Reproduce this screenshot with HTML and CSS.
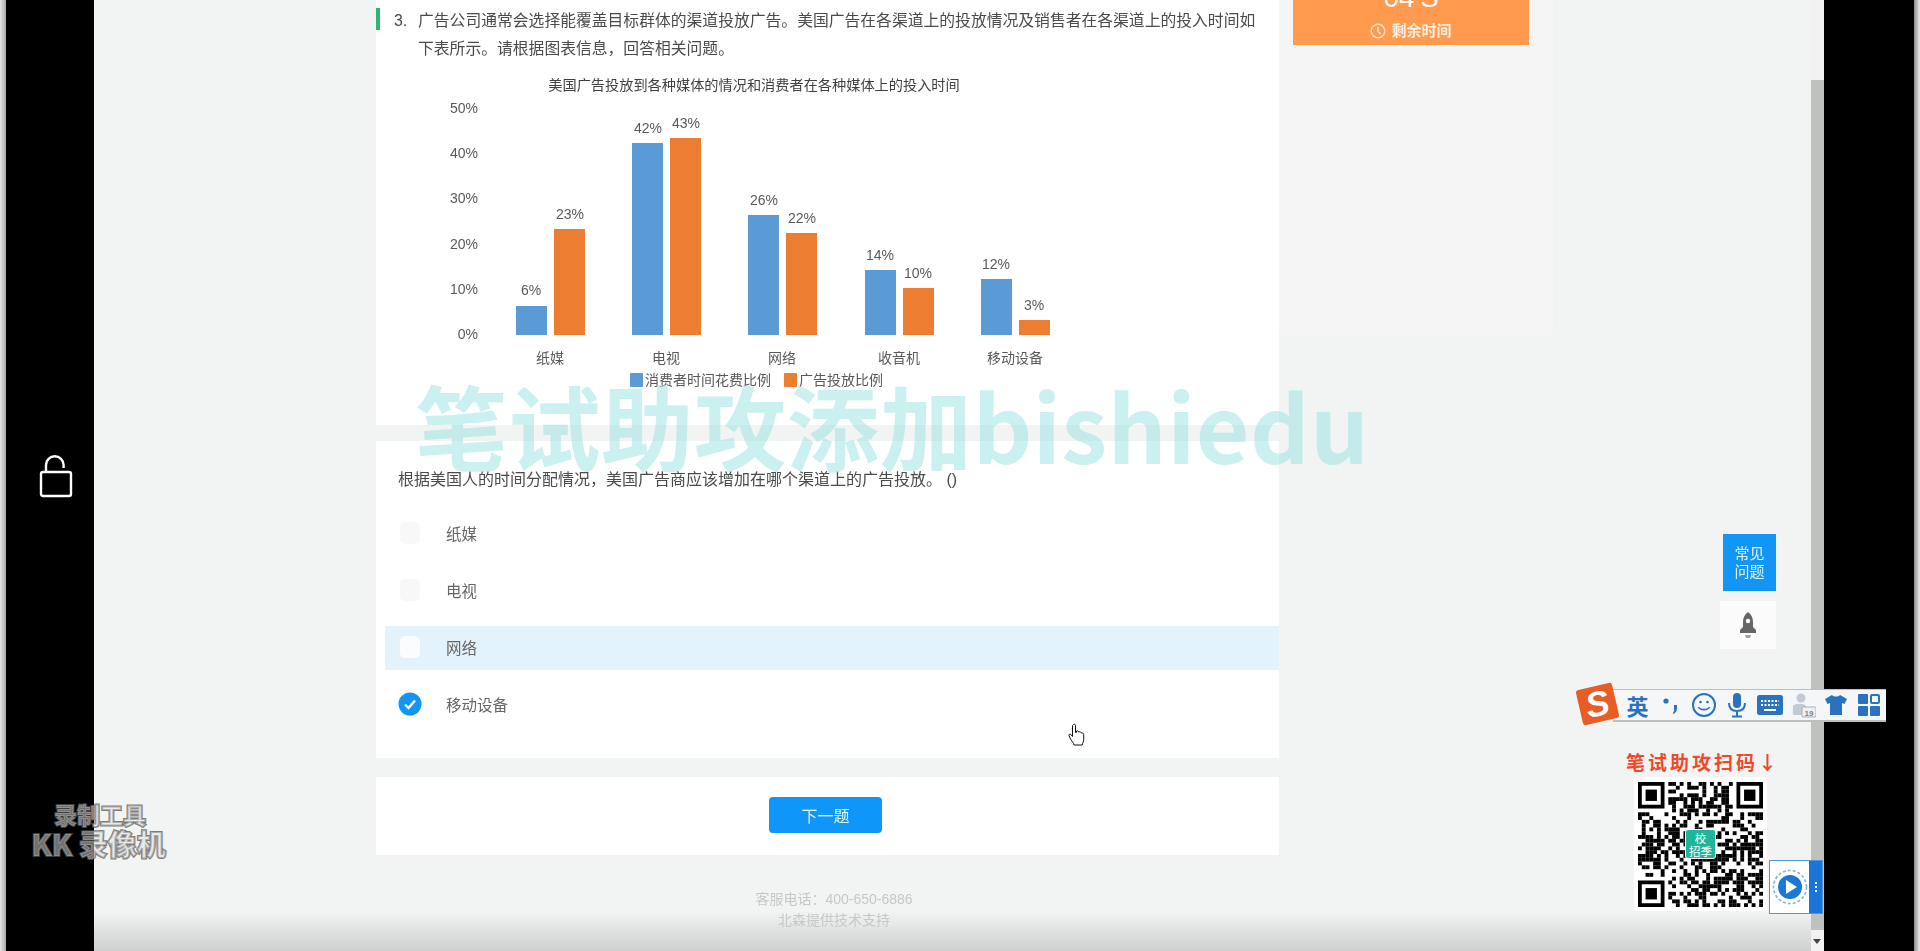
FILE: index.html
```html
<!DOCTYPE html>
<html lang="zh-CN">
<head>
    <meta charset="UTF-8">
    <meta name="viewport" content="width=device-width, initial-scale=1.0">
    <title>笔试</title>
    <link rel="stylesheet" href="styles.css">
</head>
<body>
    <div class="edge-left"></div>
    <aside class="black-left">
        <svg class="lock" width="36" height="44" viewBox="0 0 36 44" fill="none" stroke="#fff" stroke-width="2.4">
            <rect x="3" y="17" width="30" height="24" rx="2"/>
            <path d="M8 17V10a8.800 8.800 0 0 1 17.600 0v3"/>
        </svg>
    </aside>

    <main class="page">
        <div class="exam">
            <div class="exam-main">
                <section class="card card-chart">
                    <div class="stem">
                        <span class="stem-mark"></span>
                        <span class="stem-no">3.</span>
                        <p class="stem-text">广告公司通常会选择能覆盖目标群体的渠道投放广告。美国广告在各渠道上的投放情况及销售者在各渠道上的投入时间如下表所示。请根据图表信息，回答相关问题。</p>
                    </div>
                    <svg class="chart" width="903" height="360" viewBox="376 63 903 360">
                        <text class="chart-title" x="754" y="90" text-anchor="middle">美国广告投放到各种媒体的情况和消费者在各种媒体上的投入时间</text>
                        <g class="axis" text-anchor="end">
                            <text x="478" y="113">50%</text>
                            <text x="478" y="158">40%</text>
                            <text x="478" y="203">30%</text>
                            <text x="478" y="249">20%</text>
                            <text x="478" y="294">10%</text>
                            <text x="478" y="339">0%</text>
                        </g>
                        <g fill="#5b9bd5">
                            <rect x="516" y="306" width="31" height="29"/>
                            <rect x="632" y="143" width="31" height="192"/>
                            <rect x="748" y="215" width="31" height="120"/>
                            <rect x="865" y="270" width="31" height="65"/>
                            <rect x="981" y="279" width="31" height="56"/>
                        </g>
                        <g fill="#ed7d31">
                            <rect x="554" y="229" width="31" height="106"/>
                            <rect x="670" y="138" width="31" height="197"/>
                            <rect x="786" y="233" width="31" height="102"/>
                            <rect x="903" y="288" width="31" height="47"/>
                            <rect x="1019" y="320" width="31" height="15"/>
                        </g>
                        <g class="axis" text-anchor="middle">
                            <text x="531" y="295">6%</text>
                            <text x="570" y="219">23%</text>
                            <text x="648" y="133">42%</text>
                            <text x="686" y="128">43%</text>
                            <text x="764" y="205">26%</text>
                            <text x="802" y="223">22%</text>
                            <text x="880" y="260">14%</text>
                            <text x="918" y="278">10%</text>
                            <text x="996" y="269">12%</text>
                            <text x="1034" y="310">3%</text>
                            <text x="550" y="363">纸媒</text>
                            <text x="666" y="363">电视</text>
                            <text x="782" y="363">网络</text>
                            <text x="899" y="363">收音机</text>
                            <text x="1015" y="363">移动设备</text>
                        </g>
                        <rect x="630" y="373" width="13" height="14" rx="1" fill="#5b9bd5"/>
                        <text class="axis" x="645" y="385">消费者时间花费比例</text>
                        <rect x="784" y="373" width="13" height="14" rx="1" fill="#ed7d31"/>
                        <text class="axis" x="799" y="385">广告投放比例</text>
                    </svg>
                </section>

                <section class="card card-options">
                    <p class="question">根据美国人的时间分配情况，美国广告商应该增加在哪个渠道上的广告投放。 ()</p>
                    <div class="option"><span class="ghost"></span>纸媒</div>
                    <div class="option"><span class="ghost"></span>电视</div>
                    <div class="option option-hover"><span class="ghost"></span>网络</div>
                    <div class="option">
                        <svg class="check" width="24" height="24" viewBox="0 0 24 24">
                            <circle cx="12" cy="12" r="11.500" fill="#1296f6"/>
                            <path d="M7 12.500l3.500 3.500 6.500-7.500" fill="none" stroke="#fff" stroke-width="2.400"/>
                        </svg>
                        移动设备
                    </div>
                </section>

                <section class="card card-next">
                    <button class="next-btn">下一题</button>
                </section>

                <footer class="foot">
                    <p>客服电话：400-650-6886</p>
                    <p>北森提供技术支持</p>
                </footer>
            </div>

            <div class="exam-side">
                <div class="timer">
                    <div class="timer-num">04'S</div>
                    <div class="timer-label">
                        <svg width="16" height="16" viewBox="0 0 14 14" fill="none" stroke="#fde3c6" stroke-width="1.300">
                            <circle cx="7" cy="7" r="6"/>
                            <path d="M7 3.500V7.500L9.500 9.500"/>
                        </svg>
                        剩余时间
                    </div>
                </div>
            </div>
        </div>

        <a class="help-btn">常见<br>问题</a>
        <a class="top-btn">
            <svg width="22" height="28" viewBox="0 0 22 28" fill="#666">
                <path d="M11 1c3.500 2.500 5 6 5 10v5l3 3v3H3v-3l3-3v-5c0-4 1.500-7.500 5-10z"/>
                <circle cx="11" cy="10" r="2.200" fill="#fff"/>
                <path d="M8 24h6l-1 3H9z" opacity=".6"/>
            </svg>
        </a>
        <div class="video-fade"></div>
    </main>

    <div class="scrollbar">
        <div class="scroll-thumb"></div>
        <span class="scroll-down"></span>
    </div>
    <aside class="black-right"></aside>
    <div class="edge-right"></div>

    <div class="big-mark">笔试助攻添加bishiedu</div>

    <div class="kk-mark">
        <div class="kk-line1">录制工具</div>
        <div class="kk-line2">KK 录像机</div>
    </div>

    <svg class="hand" width="18" height="24" viewBox="0 0 18 24" fill="#fff" stroke="#111" stroke-width="1">
        <path d="M5.500 1.500c1-.8 2 0 2 1v7l1-.2V8c1-.6 2 0 2 1l1-.1c.9-.3 1.700.2 1.700 1l1 .1c.9 0 1.500.6 1.500 1.500v5c0 2-1 3-1.500 5.500H6c-.5-2-2-3.500-3.500-6L1 12.500c-.5-1 .8-2 1.800-1l1.700 2V2.500z"/>
    </svg>

    <div class="ime">
        <div class="ime-logo"><span>S</span></div>
        <span class="ime-item ime-lang">英</span>
        <span class="ime-item">
            <svg width="24" height="24" viewBox="0 0 24 24" fill="#2a72c0">
                <circle cx="7" cy="8" r="2.600"/>
                <path d="M15 12h3v3c0 3-1.500 5-3.500 6l-.8-1c1-.8 1.500-2 1.500-3.500H15z"/>
            </svg>
        </span>
        <span class="ime-item">
            <svg width="26" height="26" viewBox="0 0 26 26" fill="none" stroke="#2a72c0" stroke-width="2">
                <circle cx="13" cy="13" r="11"/>
                <circle cx="9.500" cy="10" r="1.300" fill="#2a72c0" stroke="none"/>
                <circle cx="16.500" cy="10" r="1.300" fill="#2a72c0" stroke="none"/>
                <path d="M7.500 15c1.500 3.500 9.500 3.500 11 0" stroke-width="1.600"/>
            </svg>
        </span>
        <span class="ime-item">
            <svg width="22" height="26" viewBox="0 0 22 26" fill="none" stroke="#2a72c0" stroke-width="2">
                <rect x="7" y="1" width="8" height="15" rx="4" fill="#2a72c0" stroke="none"/>
                <path d="M3 11c0 5.500 3.500 8 8 8s8-2.500 8-8M11 19v5M6 24.500h10"/>
            </svg>
        </span>
        <span class="ime-item">
            <svg width="26" height="20" viewBox="0 0 26 20">
                <rect width="26" height="20" rx="2.500" fill="#2a72c0"/>
                <path d="M4 6h18M4 10h18" stroke="#fff" stroke-width="2" stroke-dasharray="2 1.500"/>
                <path d="M7 15h12" stroke="#fff" stroke-width="2"/>
            </svg>
        </span>
        <span class="ime-item">
            <svg width="26" height="26" viewBox="0 0 26 26">
                <circle cx="11" cy="6" r="4.500" fill="#c3cad2"/>
                <path d="M3 14c2-3 11-3 13 0v9H6c-3 0-4-1-3-4z" fill="#c3cad2"/>
                <rect x="12" y="15" width="14" height="10" rx="1" fill="#eef0f1" stroke="#aab1b8"/>
                <text class="ime-count" x="19" y="23.500" text-anchor="middle">19</text>
            </svg>
        </span>
        <span class="ime-item">
            <svg width="24" height="24" viewBox="0 0 24 24" fill="#2a72c0">
                <path d="M8 2c1.500 2 6.500 2 8 0l7 4-2.500 5-2.500-1v12H6V10l-2.500 1L1 6z"/>
            </svg>
        </span>
        <span class="ime-item">
            <svg width="22" height="22" viewBox="0 0 22 22" fill="#2a72c0">
                <rect width="10" height="10" rx="1"/>
                <rect x="13" y="1" width="8" height="8" rx="1" fill="none" stroke="#2a72c0" stroke-width="2"/>
                <rect y="12" width="10" height="10" rx="1"/>
                <rect x="12" y="12" width="10" height="10" rx="1"/>
            </svg>
        </span>
    </div>

    <div class="scan-title">笔试助攻扫码↓</div>
    <div class="qr">
        <svg id="qrCode" width="125" height="125" viewBox="0 0 33 33"></svg>
        <div class="qr-logo">校<br>招季</div>
    </div>

    <div class="recorder">
        <div class="recorder-icon">
            <svg width="36" height="36" viewBox="0 0 36 36">
                <circle cx="18" cy="18" r="16.500" fill="none" stroke="#7db4e6" stroke-width="1.600" stroke-dasharray="3 2"/>
                <circle cx="18" cy="18" r="12" fill="#1a78d6"/>
                <path d="M14 11l11 7-11 7z" fill="#fff"/>
            </svg>
        </div>
        <div class="recorder-more"><i></i><i></i><i></i></div>
    </div>

    <script src="qr.js"></script>
</body>
</html>
```

FILE: styles.css
```css
html, body {
    margin: 0;
    height: 951px;
    overflow: hidden;
}
body {
    position: relative;
    display: flex;
    background: #000;
    font-family: "Liberation Sans", "Noto Sans CJK SC", sans-serif;
    color: #4a4a4a;
}
p {
    margin: 0;
}

/* black bars of the recording */
.edge-left {
    width: 6px;
    background: linear-gradient(90deg, #e6e6e6, #a9a9a9);
}
.edge-right {
    width: 6px;
    background: linear-gradient(90deg, #8c8c8c, #ececec);
}
.black-left {
    width: 88px;
    background: #000;
    display: flex;
    justify-content: center;
    padding-top: 455px;
    box-sizing: border-box;
}
.lock {
    margin-left: 12px;
}
.black-right {
    width: 90px;
    background: #000;
}

.page {
    position: relative;
    width: 1717px;
    background: #f2f4f3;
    overflow: hidden;
}
.exam {
    display: flex;
    padding-left: 282px;
    filter: blur(0.5px);
}
.exam-main {
    width: 903px;
}
.card {
    background: #fff;
}
.card-chart {
    height: 425px;
    box-sizing: border-box;
    padding-top: 7px;
    margin-bottom: 16px;
}
.stem {
    display: flex;
    font-size: 15.8px;
    line-height: 28px;
}
.stem-mark {
    width: 4px;
    height: 22px;
    margin-top: 1px;
    background: #2bb673;
    flex: none;
}
.stem-no {
    width: 24px;
    margin-left: 14px;
    flex: none;
}
.stem-text {
    width: 845px;
}
.chart {
    display: block;
}
.chart text {
    font-family: "Liberation Sans", "Noto Sans CJK SC", sans-serif;
}
.chart-title {
    font-size: 14.2px;
    fill: #3f3f3f;
}
.axis {
    font-size: 14px;
    fill: #595959;
}

.card-options {
    height: 317px;
    box-sizing: border-box;
    padding-top: 27px;
    margin-bottom: 19px;
}
.question {
    font-size: 16px;
    line-height: 24px;
    padding-left: 22px;
    margin-bottom: 20px;
}
.option {
    height: 44px;
    margin: 0 0 13px 9px;
    padding: 0 0 3px 14px;
    box-sizing: border-box;
    display: flex;
    align-items: center;
    gap: 25px;
    font-size: 15.5px;
    color: #666;
}
.option-hover {
    background: #e3f3fd;
}
.option-hover .ghost {
    background: #fafcfd;
}
.ghost {
    width: 20px;
    height: 22px;
    margin: 0 1px;
    border-radius: 5px;
    background: #f8f8f8;
}
.check {
    margin-left: -1px;
    margin-right: -1px;
}
.card-next {
    height: 78px;
    box-sizing: border-box;
    padding: 20px 4px 0 0;
    display: flex;
    justify-content: center;
}
.next-btn {
    width: 113px;
    height: 36px;
    border: none;
    border-radius: 4px;
    background: #0e97f9;
    color: #e8f6ff;
    font: 16px "Liberation Sans", "Noto Sans CJK SC", sans-serif;
}
.foot {
    padding: 34px 0 0 13px;
    text-align: center;
    font-size: 14px;
    line-height: 21px;
    color: #c6c8c8;
}

.exam-side {
    width: 274px;
    height: 335px;
    background: #f4f5f4;
}
.timer {
    width: 236px;
    height: 45px;
    margin-left: 14px;
    background: #ff9a4f;
    color: #fff;
    text-align: center;
    overflow: hidden;
}
.timer-num {
    font-size: 28px;
    line-height: 30px;
    margin-top: -17px;
    font-weight: 500;
}
.timer-label {
    display: flex;
    justify-content: center;
    align-items: center;
    gap: 5px;
    margin-top: 8px;
    font-size: 15px;
    font-weight: 700;
    line-height: 20px;
    color: #fdeedd;
}

/* floating buttons */
.help-btn {
    position: absolute;
    left: 1629px;
    top: 534px;
    width: 53px;
    height: 57px;
    background: #1296f6;
    color: #dff2ff;
    font-size: 15px;
    line-height: 18px;
    text-align: center;
    padding-top: 11px;
    box-sizing: border-box;
    filter: blur(0.4px);
}
.top-btn {
    position: absolute;
    left: 1626px;
    top: 601px;
    width: 56px;
    height: 48px;
    background: #fbfbfb;
    display: flex;
    justify-content: center;
    align-items: center;
}
.video-fade {
    position: absolute;
    left: 0;
    right: 0;
    bottom: 0;
    height: 40px;
    background: linear-gradient(rgba(200, 202, 201, 0), rgba(200, 202, 201, 0.85));
}

.scrollbar {
    position: relative;
    width: 13px;
    background: #f1f2f1;
}
.scroll-thumb {
    margin-top: 80px;
    height: 850px;
    background: #bfc1bf;
}
.scroll-down {
    position: absolute;
    left: 2px;
    bottom: 7px;
    border: 4px solid transparent;
    border-top: 5px solid #444;
    border-bottom: none;
}

/* overlays of the recording */
.big-mark {
    position: absolute;
    left: 415px;
    top: 370px;
    font: 700 92.500px/108px "Noto Sans CJK SC", sans-serif;
    letter-spacing: 0.45px;
    color: rgba(160, 228, 226, 0.56);
    white-space: nowrap;
}
.kk-mark {
    position: absolute;
    left: 33px;
    top: 800px;
    width: 134px;
    text-align: center;
    font-family: "Noto Sans CJK SC", sans-serif;
    font-weight: 900;
    color: rgba(225, 225, 225, 0.5);
    -webkit-text-stroke: 2px rgba(85, 85, 85, 0.75);
    paint-order: stroke fill;
}
.kk-line1 {
    font-size: 23px;
    line-height: 28px;
}
.kk-line2 {
    font-size: 29px;
    line-height: 31px;
    margin-left: -3px;
    white-space: nowrap;
}
.hand {
    position: absolute;
    left: 1068px;
    top: 723px;
}

.ime {
    position: absolute;
    left: 1613px;
    top: 689px;
    width: 273px;
    height: 33px;
    box-sizing: border-box;
    padding-left: 8px;
    display: flex;
    background: #f4f6f8;
    border-top: 1px solid #bdbfbf;
    border-bottom: 2px solid #bdbfbf;
}
.ime-logo {
    position: absolute;
    left: -34px;
    top: -4px;
    width: 37px;
    height: 36px;
    border-radius: 3px;
    background: #e85d26;
    transform: rotate(-13deg);
    display: flex;
    justify-content: center;
    align-items: center;
    color: #fff;
    font: italic 700 35px/36px "Liberation Sans", sans-serif;
}
.ime-item {
    width: 33px;
    display: flex;
    justify-content: center;
    align-items: center;
}
.ime-lang {
    font: 700 22px "Noto Sans CJK SC", sans-serif;
    color: #2a72c0;
}
.ime-count {
    font: 700 8px "Liberation Sans", sans-serif;
    fill: #7c8590;
}

.scan-title {
    position: absolute;
    left: 1626px;
    top: 748px;
    font: 700 19px/28px "Noto Sans CJK SC", sans-serif;
    letter-spacing: 3px;
    color: #f0492a;
    white-space: nowrap;
}
.qr {
    position: absolute;
    left: 1634px;
    top: 777px;
    width: 133px;
    height: 134px;
    background: #fff;
    display: flex;
    justify-content: center;
    align-items: center;
}
.qr-logo {
    position: absolute;
    left: 51px;
    top: 52px;
    width: 31px;
    height: 30px;
    border-radius: 3px;
    border: 1px solid #fff;
    background: #1fb59a;
    color: #fff;
    font: 11.500px/13px "Noto Sans CJK SC", sans-serif;
    text-align: center;
    padding-top: 2px;
    box-sizing: border-box;
    white-space: nowrap;
}
.recorder {
    position: absolute;
    left: 1769px;
    top: 860px;
    width: 54px;
    height: 54px;
    box-sizing: border-box;
    display: flex;
    background: #fff;
    border: 1px solid #4b97de;
}
.recorder-icon {
    width: 39px;
    display: flex;
    justify-content: center;
    align-items: center;
}
.recorder-more {
    flex: 1;
    background: #1a75d9;
    display: flex;
    flex-direction: column;
    justify-content: center;
    align-items: center;
    gap: 2px;
}
.recorder-more i {
    width: 2px;
    height: 2px;
    background: #fff;
}
```

FILE: qr.js
```js
// draws the code beside the recording, modules are only pseudo random
const qrCode = document.getElementById('qrCode');
const QR_SIZE = 33;
let seed = 20;

function nextRandom() {
    seed = (seed * 1103515245 + 12345) % 2147483648;
    return seed / 2147483648;
}

function inFinder(x, y) {
    const nearLeft = x < 8;
    const nearRight = x >= QR_SIZE - 8;
    const nearTop = y < 8;
    const nearBottom = y >= QR_SIZE - 8;
    return (nearLeft && nearTop) || (nearRight && nearTop) || (nearLeft && nearBottom);
}

function addRect(x, y, w, h, color) {
    const rect = document.createElementNS('http://www.w3.org/2000/svg', 'rect');
    rect.setAttribute('x', x);
    rect.setAttribute('y', y);
    rect.setAttribute('width', w);
    rect.setAttribute('height', h);
    rect.setAttribute('fill', color);
    qrCode.appendChild(rect);
}

function addFinder(x, y) {
    addRect(x, y, 7, 7, '#000');
    addRect(x + 1, y + 1, 5, 5, '#fff');
    addRect(x + 2, y + 2, 3, 3, '#000');
}

for (let y = 0; y < QR_SIZE; y++) {
    for (let x = 0; x < QR_SIZE; x++) {
        if (!inFinder(x, y) && nextRandom() < 0.52) {
            addRect(x, y, 1.02, 1.02, '#000');
        }
    }
}
addFinder(0, 0);
addFinder(QR_SIZE - 7, 0);
addFinder(0, QR_SIZE - 7);
```
